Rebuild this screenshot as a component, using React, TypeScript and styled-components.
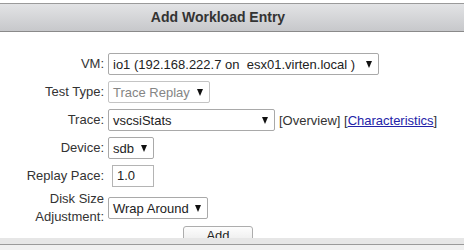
import styled, { createGlobalStyle } from "styled-components";

const GlobalStyle = createGlobalStyle`
  body {
    margin: 0;
    background: #fff;
    font-family: "Liberation Sans", Arial, sans-serif;
    font-size: 13px;
    color: #333;
  }
`;

type Field = {
  label: string[];
  kind: "select" | "input";
  value: string;
  width: number;
  disabled?: boolean;
  extra?: boolean;
};

const fields: Field[] = [
  { label: ["VM:"], kind: "select", value: "io1 (192.168.222.7 on  esx01.virten.local )", width: 271 },
  { label: ["Test Type:"], kind: "select", value: "Trace Replay", width: 102, disabled: true },
  { label: ["Trace:"], kind: "select", value: "vscsiStats", width: 167, extra: true },
  { label: ["Device:"], kind: "select", value: "sdb", width: 46 },
  { label: ["Replay Pace:"], kind: "input", value: "1.0", width: 42 },
  { label: ["Disk Size", "Adjustment:"], kind: "select", value: "Wrap Around", width: 100 },
];

const App = () => {
  return (
    <>
      <GlobalStyle />
      <Dialog>
        <TitleBar>Add Workload Entry</TitleBar>
        <Body>
          <Form>
            {fields.map((f) => (
              <Row key={f.label.join(" ")}>
                <Label>
                  {f.label.map((l) => (
                    <span key={l}>{l}</span>
                  ))}
                </Label>
                <Control>
                  {f.kind === "select" ? (
                    <Dropdown width={f.width} disabled={f.disabled}>
                      <span>{f.value}</span>
                      <Arrow />
                    </Dropdown>
                  ) : (
                    <TextBox width={f.width}>{f.value}</TextBox>
                  )}
                  {f.extra && (
                    <Links>
                      [Overview] [<a href="#">Characteristics</a>]
                    </Links>
                  )}
                </Control>
              </Row>
            ))}
          </Form>
          <ButtonRow>
            <Button>Add</Button>
          </ButtonRow>
        </Body>
        <Footer />
      </Dialog>
    </>
  );
};

const Dialog = styled.div`
  width: 464px;
  height: 250px;
  display: flex;
  flex-direction: column;
  overflow: hidden;
  padding-top: 3px;
  box-sizing: border-box;
`;

const TitleBar = styled.div`
  height: 27px;
  line-height: 27px;
  border-top: 1px solid #9a9a9a;
  border-bottom: 1px solid #8a8a8a;
  background: linear-gradient(#e2e3e5, #c7c8cb);
  text-align: center;
  padding-right: 28px;
  font-weight: bold;
  font-size: 14px;
  color: #333;
`;

const Body = styled.div`
  flex: 1;
  overflow: hidden;
  padding-top: 18px;
`;

const Form = styled.div`
  display: grid;
  grid-template-columns: 104px auto;
  column-gap: 4px;
`;

const Row = styled.div`
  display: contents;
`;

const Label = styled.div`
  min-height: 28px;
  display: flex;
  flex-direction: column;
  justify-content: center;
  align-items: flex-end;
  line-height: 18px;
  color: #333;
  white-space: nowrap;
`;

const Control = styled.div`
  display: flex;
  align-items: center;
  gap: 4px;
`;

const Dropdown = styled.div<{ width: number; disabled?: boolean }>`
  width: ${({ width }) => width}px;
  height: 22px;
  box-sizing: border-box;
  border: 1px solid ${({ disabled }) => (disabled ? "#c4c4c4" : "#a9a9a9")};
  border-radius: 2px;
  background: #fff;
  display: flex;
  align-items: center;
  justify-content: space-between;
  padding: 0 6px 0 4px;
  color: ${({ disabled }) => (disabled ? "#858585" : "#222")};
  white-space: pre;
  overflow: hidden;
`;

const Arrow = styled.i`
  width: 0;
  height: 0;
  border-left: 3.5px solid transparent;
  border-right: 3.5px solid transparent;
  border-top: 7px solid #111;
  flex: none;
`;

const TextBox = styled.div<{ width: number }>`
  width: ${({ width }) => width}px;
  height: 22px;
  box-sizing: border-box;
  margin-left: 4px;
  border: 1px solid #b4b4b4;
  padding: 0 4px;
  line-height: 20px;
  color: #222;
`;

const Links = styled.span`
  color: #333;
  white-space: nowrap;
  a {
    color: #2323a8;
    text-decoration: underline;
  }
`;

const ButtonRow = styled.div`
  text-align: center;
  padding-right: 28px;
  margin-top: 0;
`;

const Button = styled.button`
  width: 70px;
  height: 24px;
  border: 1px solid #adadad;
  border-radius: 3px;
  background: linear-gradient(#fdfdfd, #e4e4e4);
  font-family: "Liberation Sans", Arial, sans-serif;
  font-size: 13px;
  color: #222;
  padding: 0 0 6px;
`;

const Footer = styled.div`
  height: 12px;
  flex: none;
  background: linear-gradient(#e6e6e6 0, #e6e6e6 6px, #9a9a9a 6px, #9a9a9a 7px, #f0f0f0 7px);
`;

export default App;
